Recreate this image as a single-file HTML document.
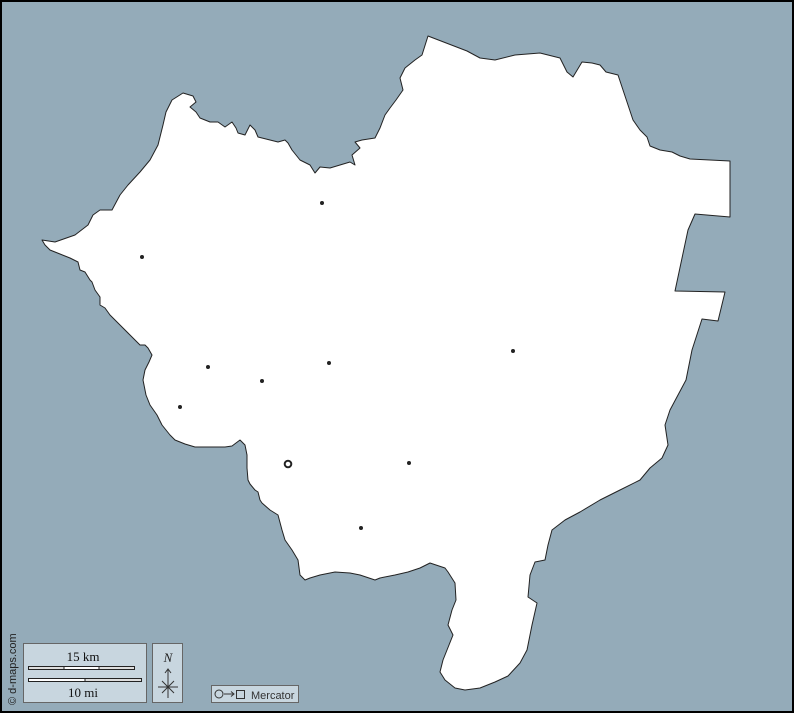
<!DOCTYPE html>
<html><head><meta charset="utf-8"><style>
html,body{margin:0;padding:0;background:#000}
svg{display:block}
</style></head><body>
<svg width="794" height="713" viewBox="0 0 794 713" xmlns="http://www.w3.org/2000/svg">
<rect x="0" y="0" width="794" height="713" fill="#000"/>
<rect x="2" y="2" width="790" height="709" fill="#94abb9"/>
<polygon fill="#fff" stroke="#222" stroke-width="1" stroke-linejoin="round" points="
42,240 55,242 75,235 88,225 93,215 100,210 112,210 120,195 128,185 140,172 150,160 158,145 163,125 166,112 172,100 183,93 193,96 196,102 190,107 196,112 200,118 210,122 218,122 225,127 232,122 236,128 238,133 245,135 250,125 255,130 258,137 270,140 278,142 285,140 288,143 292,150 300,160 310,165 315,173 320,167 330,168 340,165 350,162 355,165 352,155 360,148 355,142 362,140 375,138 380,128 385,115 390,108 396,100 403,90 400,78 405,68 415,60 422,55 428,36
467,51 480,58 495,60 515,55 540,53 560,58 567,72 573,77 582,62 592,63 600,65 606,72 618,75 633,120 640,130 647,137 650,146 660,150 672,152 680,156 690,159 730,161 730,217 695,214 688,230 675,291 725,292 718,321 702,319 692,350 686,380 678,395 670,410 665,425 668,445 662,458 650,468 640,480 620,490 600,500 580,512 565,520 552,530 548,545 545,560 535,562 530,575 528,597 537,603 532,625 527,650 520,663 508,676 495,682 480,688 465,690 455,688 445,680 440,672 443,660 447,650 453,635 448,625 452,610 456,600 455,583 448,572 445,568 430,563 420,568 408,572 395,575 380,578 375,580 360,575 350,573 335,572 320,575 310,578 305,580 300,575 298,560 292,550 285,540 282,530 278,515 270,510 262,503 260,500 258,492 255,490 250,484 248,480 247,468 247,455 245,445 240,440 232,446 225,447 210,447 195,447 185,444 175,440 170,435 162,425 157,415 150,405 146,395 143,380 145,370 149,362 152,355 148,348 145,345 140,345 130,335 120,325 110,315 105,308 100,305 100,297 95,290 92,282 90,280 85,272 80,270 78,262 70,258 60,254 50,250 45,245"/>
<g fill="#222">
<circle cx="322" cy="203" r="2"/>
<circle cx="142" cy="257" r="2"/>
<circle cx="329" cy="363" r="2"/>
<circle cx="208" cy="367" r="2"/>
<circle cx="262" cy="381" r="2"/>
<circle cx="180" cy="407" r="2"/>
<circle cx="513" cy="351" r="2"/>
<circle cx="409" cy="463" r="2"/>
<circle cx="361" cy="528" r="2"/>
</g>
<circle cx="288" cy="464" r="3.3" fill="none" stroke="#222" stroke-width="2"/>
<text transform="translate(16,705) rotate(-90)" font-family="Liberation Sans, sans-serif" font-size="11" fill="#222">© d-maps.com</text>
<rect x="23.5" y="643.5" width="123" height="59" fill="#c8d6df" stroke="#666"/>
<text x="83" y="661" text-anchor="middle" font-family="Liberation Serif, serif" font-size="13" fill="#111">15 km</text>
<rect x="28.5" y="666.5" width="106" height="3" fill="#ddd" stroke="#222"/>
<rect x="64" y="667" width="35" height="2" fill="#fff"/>
<line x1="64" y1="666" x2="64" y2="670" stroke="#222"/>
<line x1="99" y1="666" x2="99" y2="670" stroke="#222"/>
<rect x="28.5" y="678.5" width="113" height="3" fill="#ddd" stroke="#222"/>
<rect x="29" y="679" width="56" height="2" fill="#fff"/>
<line x1="85" y1="678" x2="85" y2="682" stroke="#222"/>
<text x="83" y="697" text-anchor="middle" font-family="Liberation Serif, serif" font-size="13" fill="#111">10 mi</text>
<rect x="152.5" y="643.5" width="30" height="59" fill="#c8d6df" stroke="#666"/>
<text x="168" y="662" text-anchor="middle" font-family="Liberation Serif, serif" font-style="italic" font-size="13" fill="#222">N</text>
<g stroke="#333" stroke-width="1" fill="none">
<line x1="168" y1="670" x2="168" y2="698"/>
<polyline points="165,673 168,669 171,673"/>
<line x1="158" y1="687" x2="178" y2="687"/>
<line x1="162" y1="681" x2="174" y2="693"/>
<line x1="174" y1="681" x2="162" y2="693"/>
</g>
<rect x="211.5" y="685.5" width="87" height="17" fill="#c8d6df" stroke="#666"/>
<circle cx="219" cy="694" r="4" fill="none" stroke="#333"/>
<g stroke="#333" fill="none"><line x1="224" y1="694" x2="234" y2="694"/><polyline points="231,691.5 234,694 231,696.5"/></g>
<rect x="236.5" y="690.5" width="8" height="8" fill="none" stroke="#333"/>
<text x="251" y="699" font-family="Liberation Sans, sans-serif" font-size="11" fill="#333">Mercator</text>
</svg>
</body></html>
